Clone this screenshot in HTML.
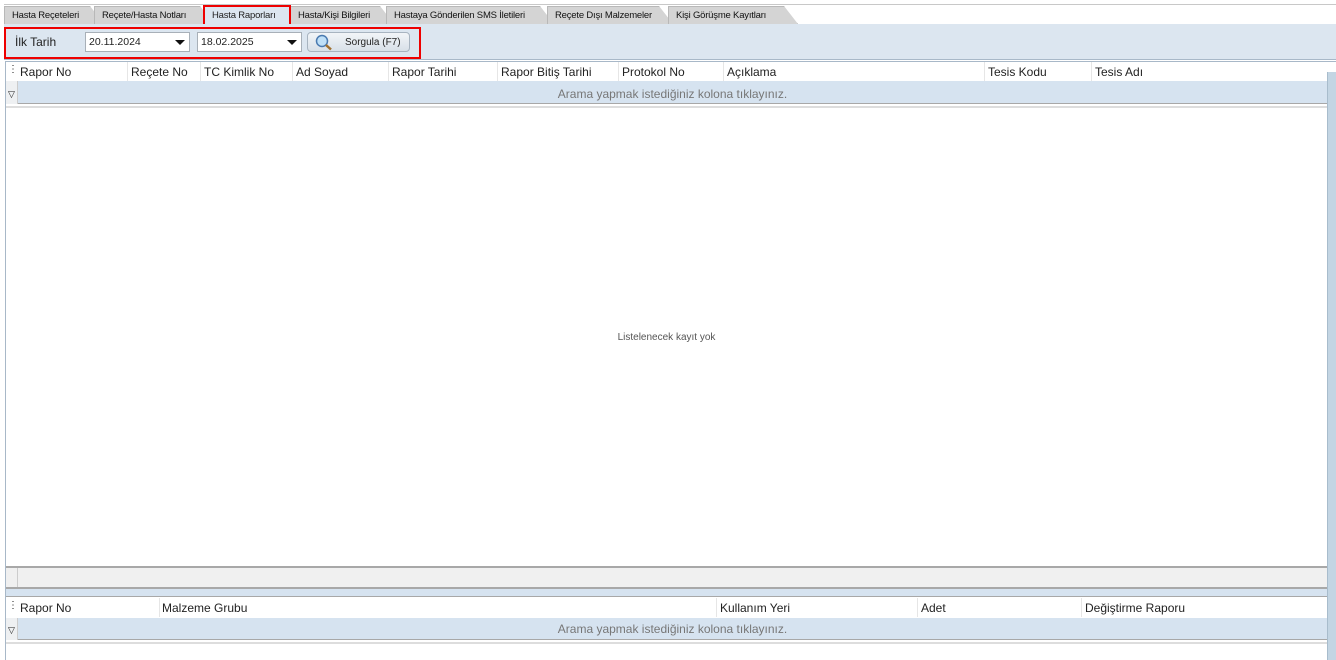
<!DOCTYPE html>
<html><head><meta charset="utf-8"><style>
*{box-sizing:border-box;margin:0;padding:0}
body{width:1336px;height:660px;background:#fff;font-family:"Liberation Sans",Arial,sans-serif;position:relative;overflow:hidden;color:#222}
.a{position:absolute}
.tab{position:absolute;top:6px;height:18px;font-size:9.5px;letter-spacing:-0.2px;line-height:18px;background:#d4d4d4;border:1px solid #b8b8b8;border-bottom:none;padding-left:7px;color:#111;clip-path:polygon(0 0,calc(100% - 14px) 0,100% 100%,0 100%)}
.hd{position:absolute;font-size:12px;line-height:20px;color:#222}
.sep{position:absolute;width:1px;background:#e6e6e6}
</style></head><body>
<div class="a" style="left:4px;top:4px;width:1332px;height:20px;background:#fff;border-top:1px solid #c8c8c8"></div>
<div class="tab" style="left:4px;width:100px">Hasta Reçeteleri</div>
<div class="tab" style="left:94px;width:120px">Reçete/Hasta Notları</div>
<div class="tab" style="left:290px;width:104px">Hasta/Kişi Bilgileri</div>
<div class="tab" style="left:386px;width:168px">Hastaya Gönderilen SMS İletileri</div>
<div class="tab" style="left:547px;width:126px">Reçete Dışı Malzemeler</div>
<div class="tab" style="left:668px;width:130px">Kişi Görüşme Kayıtları</div>
<div class="a" style="left:203px;top:5px;width:88px;height:21px;background:#dce6f0;border:2px solid #e00;font-size:9.5px;letter-spacing:-0.2px;line-height:17px;padding-left:7px">Hasta Raporları</div>
<div class="a" style="left:4px;top:24px;width:1332px;height:36px;background:#dce6f0;border-bottom:1px solid #a8b8c8"></div>
<div class="a" style="left:4px;top:27px;width:417px;height:32px;border:2px solid #e00"></div>
<div class="a" style="left:15px;top:35px;font-size:12px">İlk Tarih</div>
<div class="a" style="left:85px;top:32px;width:105px;height:20px;background:#fff;border:1px solid #a8b0b8;font-size:10.5px;line-height:18px;padding-left:3px">20.11.2024<span style="position:absolute;right:4px;top:7px;border:5px solid transparent;border-top:5px solid #111;border-bottom:none"></span></div>
<div class="a" style="left:197px;top:32px;width:105px;height:20px;background:#fff;border:1px solid #a8b0b8;font-size:10.5px;line-height:18px;padding-left:3px">18.02.2025<span style="position:absolute;right:4px;top:7px;border:5px solid transparent;border-top:5px solid #111;border-bottom:none"></span></div>
<div class="a" style="left:307px;top:32px;width:103px;height:20px;background:linear-gradient(#f2f5f8,#d8e0e8);border:1px solid #a8b4c0;border-radius:4px;font-size:10px;line-height:19px;padding-left:37px">Sorgula (F7)
<svg style="position:absolute;left:6px;top:1px" width="20" height="17" viewBox="0 0 20 17"><circle cx="8" cy="7" r="5.5" fill="#bfe0f8" stroke="#4a7ab0" stroke-width="1.5"/><path d="M12 11 L17 15.5" stroke="#a07030" stroke-width="2.5"/></svg></div>
<div class="a" style="left:5px;top:61px;width:1331px;height:506px;border-left:1px solid #a8b8c8;border-top:1px solid #a8b8c8"></div>
<div class="a" style="left:6px;top:81px;width:1321px;height:23px;background:#d6e3f0;border-bottom:1px solid #a8a8a8"></div>
<div class="a" style="left:6px;top:81px;width:12px;height:23px;background:#eef0f2;border-right:1px solid #ccc"></div>
<div class="a" style="left:8px;top:89px;font-size:9px">&#x25BD;</div>
<div class="a" style="left:6px;top:106px;width:1321px;height:2px;background:#ddd"></div>
<div class="a" style="left:8px;top:64px;font-size:10px">&#8942;</div>
<div class="hd" style="left:20px;top:62px">Rapor No</div>
<div class="hd" style="left:131px;top:62px">Reçete No</div>
<div class="hd" style="left:204px;top:62px">TC Kimlik No</div>
<div class="hd" style="left:296px;top:62px">Ad Soyad</div>
<div class="hd" style="left:392px;top:62px">Rapor Tarihi</div>
<div class="hd" style="left:501px;top:62px">Rapor Bitiş Tarihi</div>
<div class="hd" style="left:622px;top:62px">Protokol No</div>
<div class="hd" style="left:727px;top:62px">Açıklama</div>
<div class="hd" style="left:988px;top:62px">Tesis Kodu</div>
<div class="hd" style="left:1095px;top:62px">Tesis Adı</div>
<div class="sep" style="left:127px;top:62px;height:19px"></div><div class="sep" style="left:200px;top:62px;height:19px"></div><div class="sep" style="left:292px;top:62px;height:19px"></div><div class="sep" style="left:388px;top:62px;height:19px"></div><div class="sep" style="left:497px;top:62px;height:19px"></div><div class="sep" style="left:618px;top:62px;height:19px"></div><div class="sep" style="left:723px;top:62px;height:19px"></div><div class="sep" style="left:984px;top:62px;height:19px"></div><div class="sep" style="left:1091px;top:62px;height:19px"></div>
<div class="a" style="left:18px;top:87px;width:1309px;text-align:center;font-size:12px;color:#777">Arama yapmak istediğiniz kolona tıklayınız.</div>
<div class="a" style="left:6px;top:332px;width:1321px;text-align:center;font-size:10px;color:#555">Listelenecek kayıt yok</div>
<div class="a" style="left:1327px;top:72px;width:9px;height:588px;background:#c3d5e3;border-left:1px solid #a8bccc"></div>
<div class="a" style="left:6px;top:566px;width:1321px;height:23px;background:#f0f0f0;border-top:2px solid #a8a8a8;border-bottom:2px solid #a8a8a8"></div>
<div class="a" style="left:17px;top:568px;width:1px;height:19px;background:#ccc"></div>
<div class="a" style="left:6px;top:589px;width:1321px;height:8px;background:#d6e3f0;border-bottom:1px solid #a8a8a8"></div>
<div class="a" style="left:8px;top:600px;font-size:10px">&#8942;</div>
<div class="hd" style="left:20px;top:598px">Rapor No</div>
<div class="hd" style="left:162px;top:598px">Malzeme Grubu</div>
<div class="hd" style="left:720px;top:598px">Kullanım Yeri</div>
<div class="hd" style="left:921px;top:598px">Adet</div>
<div class="hd" style="left:1085px;top:598px">Değiştirme Raporu</div>
<div class="sep" style="left:159px;top:598px;height:19px"></div><div class="sep" style="left:716px;top:598px;height:19px"></div><div class="sep" style="left:917px;top:598px;height:19px"></div><div class="sep" style="left:1081px;top:598px;height:19px"></div>
<div class="a" style="left:6px;top:618px;width:1321px;height:22px;background:#d6e3f0;border-bottom:1px solid #a8a8a8"></div>
<div class="a" style="left:6px;top:618px;width:12px;height:22px;background:#eef0f2;border-right:1px solid #ccc"></div>
<div class="a" style="left:8px;top:625px;font-size:9px">&#x25BD;</div>
<div class="a" style="left:6px;top:642px;width:1321px;height:2px;background:#ddd"></div>
<div class="a" style="left:18px;top:622px;width:1309px;text-align:center;font-size:12px;color:#777">Arama yapmak istediğiniz kolona tıklayınız.</div>
<div class="a" style="left:5px;top:567px;width:1px;height:93px;background:#a8b8c8"></div>
</body></html>
